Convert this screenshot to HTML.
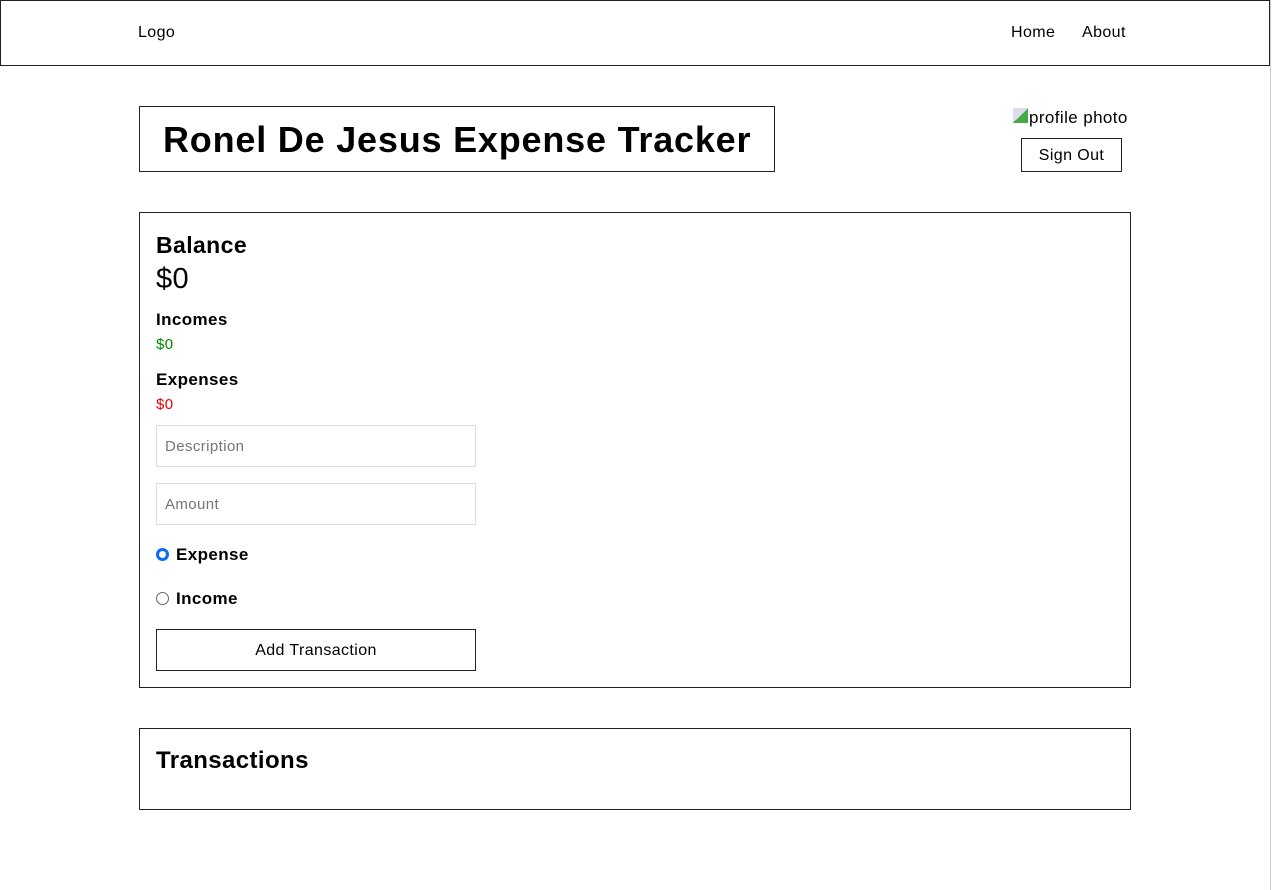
<!DOCTYPE html>
<html><head><style>
body{margin:0;width:1274px;height:890px;background:#fff;font-family:"Liberation Sans",sans-serif;color:#000;position:relative;overflow:hidden}
.a{position:absolute;letter-spacing:0.4px}
.hdr{left:0;top:0;width:1268px;height:64px;border:1px solid #222}
.box{border:1px solid #222;box-sizing:border-box}
input.t{position:absolute;box-sizing:border-box;border:1px solid #ddd;width:320px;height:42px;font:15px "Liberation Sans",sans-serif;letter-spacing:0.4px;padding-left:8px;color:#8a92a0}
.rad{position:absolute;width:13px;height:13px;border-radius:50%;box-sizing:border-box}
</style></head><body>
<div class="a hdr"></div>
<div class="a" style="left:1270px;top:0;width:1px;height:890px;background:#ccc"></div>
<div class="a" style="left:138px;top:24px;font-size:16px">Logo</div>
<div class="a" style="left:1011px;top:24px;font-size:16px">Home</div>
<div class="a" style="left:1082px;top:24px;font-size:16px">About</div>

<div class="a box" style="left:139px;top:106px;width:636px;height:66px"></div>
<div class="a" style="left:163px;top:119px;font-size:36px;font-weight:bold;letter-spacing:0.8px">Ronel De Jesus Expense Tracker</div>

<div class="a" style="left:1013px;top:108px;width:15px;height:15px;background:linear-gradient(135deg,#dde 50%,#4a4 50%)"></div>
<div class="a" style="left:1029px;top:108px;font-size:17px">profile photo</div>
<div class="a box" style="left:1021px;top:138px;width:101px;height:34px;text-align:center;line-height:34px;font-size:16px">Sign Out</div>

<div class="a box" style="left:139px;top:212px;width:992px;height:476px"></div>
<div class="a" style="left:156px;top:232px;font-size:23px;font-weight:bold">Balance</div>
<div class="a" style="left:156px;top:263px;font-size:29px">$0</div>
<div class="a" style="left:156px;top:310px;font-size:17px;font-weight:bold">Incomes</div>
<div class="a" style="left:156px;top:336px;font-size:15px;color:#080">$0</div>
<div class="a" style="left:156px;top:370px;font-size:17px;font-weight:bold">Expenses</div>
<div class="a" style="left:156px;top:396px;font-size:15px;color:#e00">$0</div>
<input class="t" style="left:156px;top:425px" placeholder="Description">
<input class="t" style="left:156px;top:483px" placeholder="Amount">
<div class="rad" style="left:156px;top:548px;border:3px solid #0a6cf5;background:#fff"></div>
<div class="a" style="left:176px;top:545px;font-size:17px;font-weight:bold">Expense</div>
<div class="rad" style="left:156px;top:592px;border:1px solid #666"></div>
<div class="a" style="left:176px;top:589px;font-size:17px;font-weight:bold">Income</div>
<div class="a box" style="left:156px;top:629px;width:320px;height:42px;text-align:center;line-height:42px;font-size:16px">Add Transaction</div>

<div class="a box" style="left:139px;top:728px;width:992px;height:82px"></div>
<div class="a" style="left:156px;top:747px;font-size:24px;font-weight:bold">Transactions</div>
</body></html>
